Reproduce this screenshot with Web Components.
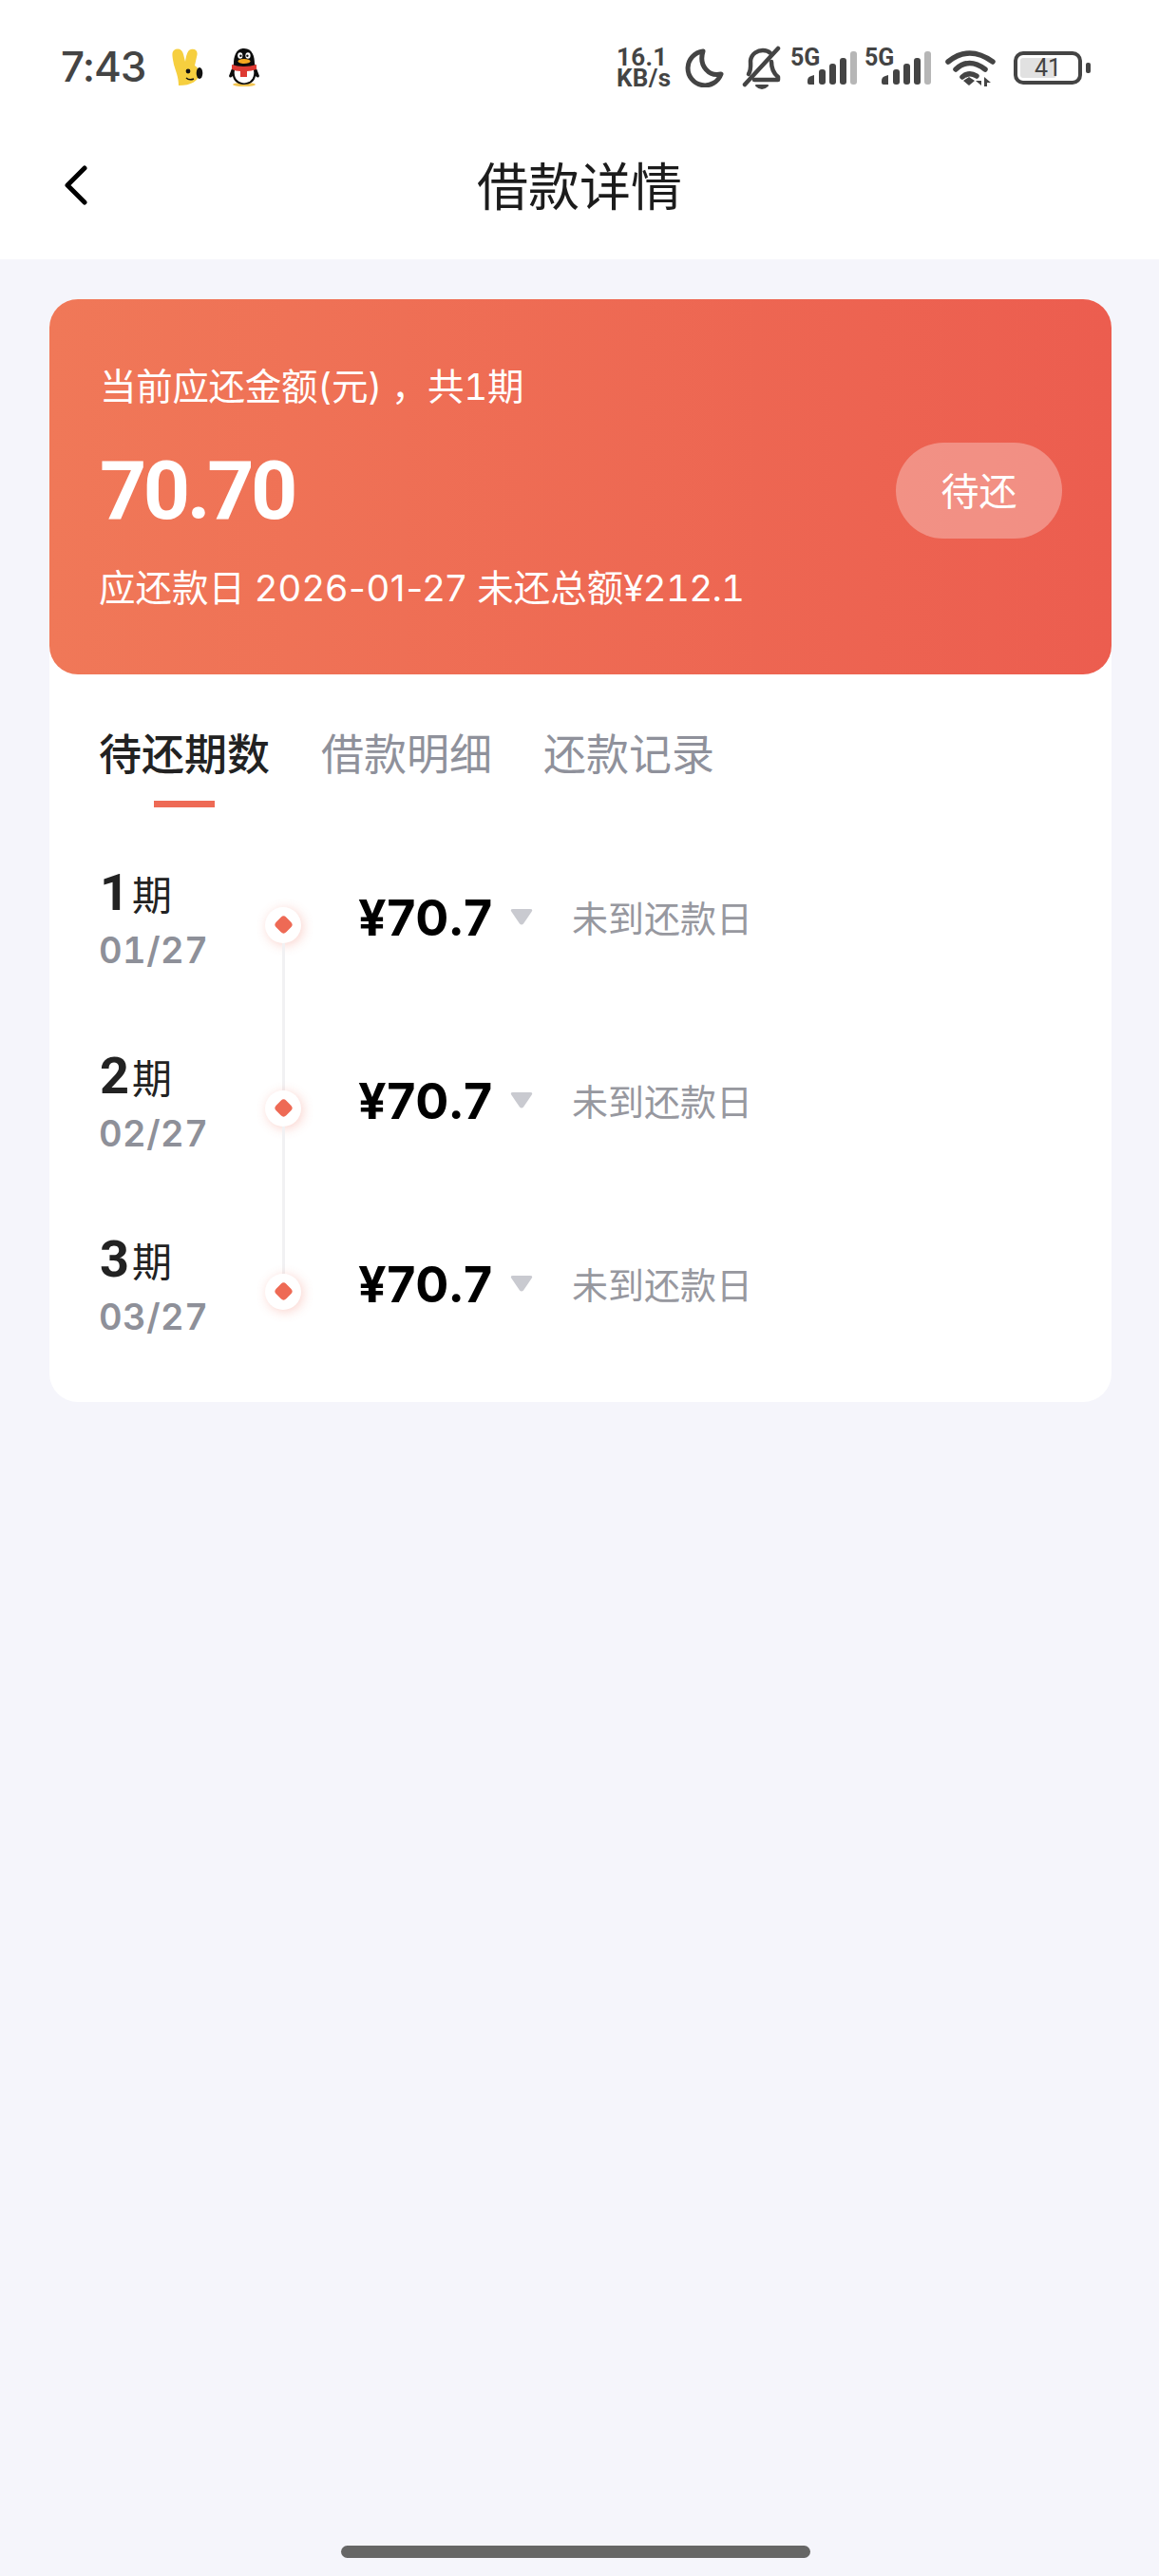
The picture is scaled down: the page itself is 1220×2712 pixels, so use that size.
<!DOCTYPE html>
<html lang="zh-CN">
<head>
<meta charset="utf-8">
<title>借款详情</title>
<style>
  html, body { margin: 0; padding: 0; }
  body {
    width: 1220px;
    min-height: 2712px;
    display: flex;
    flex-direction: column;
    background: #f5f5fb;
    font-family: "Noto Sans CJK SC", "Noto Sans", sans-serif;
  }
  .due-date { font-feature-settings: normal; letter-spacing: .9px; }
  .total { letter-spacing: -.7px; }
</style>
</head>
<body>
  <app-header>
    <status-bar></status-bar>
    <nav-bar>借款详情</nav-bar>
  </app-header>
  <loan-card>
    <loan-hero amount="70.70" state="待还">
      <span slot="title">当前应还金额(元) ，共1期</span>
      <span slot="sub">应还款日 <span class="due-date">2026-01-27</span> 未还总额<span class="total">¥212.1</span></span>
    </loan-hero>
    <loan-tabs></loan-tabs>
    <period-row first num="1" date="01/27" price="¥70.7" note="未到还款日"></period-row>
    <period-row num="2" date="02/27" price="¥70.7" note="未到还款日"></period-row>
    <period-row last num="3" date="03/27" price="¥70.7" note="未到还款日"></period-row>
  </loan-card>
  <home-bar></home-bar>

<script>
const CJK = `"Noto Sans CJK SC", "Noto Sans", sans-serif`;
const MIXED = `Inter, "Noto Sans CJK SC", sans-serif`;

class AppHeader extends HTMLElement {
  constructor() {
    super();
    this.attachShadow({ mode: "open" }).innerHTML = `
      <style>
        :host { display: block; background: #fff; height: 273px; }
      </style>
      <slot></slot>`;
  }
}

class SignalBars extends HTMLElement {
  constructor() {
    super();
    this.attachShadow({ mode: "open" }).innerHTML = `
      <style>
        :host { display: grid; width: 70px; height: 45px; }
        .tag, svg { grid-area: 1 / 1; }
        .tag { font: 700 25px/23px Roboto, sans-serif; color: #444; }
        svg { justify-self: end; align-self: end; margin-bottom: 5px; }
      </style>
      <span class="tag">5G</span>
      <svg width="52" height="35" viewBox="0 0 52 35">
        <path d="M0 31 Q0 27 4 26 L7 25 V35 H2 Q0 35 0 33 Z" fill="#444"/>
        <rect x="12" y="19" width="7" height="16" rx="3" fill="#444"/>
        <rect x="23" y="13" width="7" height="22" rx="3" fill="#444"/>
        <rect x="34" y="7" width="7" height="28" rx="3" fill="#444"/>
        <rect x="45" y="0" width="7" height="35" rx="3" fill="#b6b6b6"/>
      </svg>`;
  }
}

class StatusBar extends HTMLElement {
  constructor() {
    super();
    this.attachShadow({ mode: "open" }).innerHTML = `
      <style>
        :host {
          display: flex;
          align-items: center;
          justify-content: space-between;
          height: 142px;
          padding: 0 72px 0 64px;
          box-sizing: border-box;
          color: #444;
        }
        .left, .right { display: flex; align-items: center; }
        .time { font: 500 44px/54px Inter, Roboto, sans-serif; width: 88px; letter-spacing: -1px; white-space: nowrap; margin-top: -2px; }
        .rabbit { margin-left: 28px; }
        .penguin { margin-left: 26px; }
        .net { font: 700 26px/22px Roboto, sans-serif; width: 60px; white-space: nowrap; }
        .net div { letter-spacing: .3px; }
        .moon { margin-left: 12px; }
        .bell { margin-left: 19px; }
        signal-bars:first-of-type { margin-left: 10px; }
        signal-bars + signal-bars { margin-left: 8px; }
        .wifi { margin-left: 15px; }
        .battery { margin-left: 19px; display: flex; align-items: center; gap: 4px; }
        .cell {
          width: 72px; height: 35px; box-sizing: border-box;
          border: 4px solid #444; border-radius: 10px;
          padding: 3px; display: grid;
        }
        .fill { grid-area: 1 / 1; width: 38px; background: #e1e1e1; border-radius: 3px; }
        .level { grid-area: 1 / 1; text-align: center; font: 400 25px/21px Roboto, sans-serif; color: #444; }
        .nub { width: 5px; height: 11px; border-radius: 2px; background: #444; }
      </style>
      <div class="left">
        <span class="time">7:43</span>
        <svg class="rabbit" width="34" height="40" viewBox="0 0 34 40">
          <path d="M3 2 C7 -1 12 1 13 6 L15 14 C16 8 17 2 21 1 C26 0 29 3 27 9 L25 18 C29 21 31 24 30 28 C28 34 22 39 8 39 C8 30 5 24 3 17 C2 11 0 5 3 2 Z" fill="#f6cf3f"/>
          <ellipse cx="30" cy="26" rx="3.300" ry="6" fill="#111"/>
          <circle cx="18" cy="24" r="2.400" fill="#111"/>
          <path d="M16 31 Q19 34 24 32" stroke="#111" stroke-width="1.400" fill="none"/>
        </svg>
        <svg class="penguin" width="34" height="40" viewBox="0 0 34 40">
          <ellipse cx="17" cy="38" rx="12" ry="2" fill="#f1c452"/>
          <path d="M17 0 C26 0 28 9 28 16 L33 29 Q32 32 29 29 C28 35 23 38 17 38 C11 38 6 35 5 29 Q2 32 1 29 L6 16 C6 9 8 0 17 0 Z" fill="#0c0c0c"/>
          <path d="M8 20 H26 C29 26 27 36 17 36.500 C7 36 5 26 8 20 Z" fill="#fff"/>
          <path d="M4 17 Q17 21 30 17 L30 22 Q24 24 20 24 V30 H13 V24 Q8 24 4 22 Z" fill="#de3a33"/>
          <ellipse cx="17" cy="13.500" rx="6.500" ry="2.600" fill="#f4a71f"/>
          <ellipse cx="12.800" cy="7.500" rx="2.600" ry="3.200" fill="#fff"/>
          <ellipse cx="21" cy="7.500" rx="2.600" ry="3.200" fill="#fff"/>
          <circle cx="13.400" cy="7.800" r="1.200" fill="#111"/>
          <circle cx="20.400" cy="7.800" r="1.200" fill="#111"/>
        </svg>
      </div>
      <div class="right">
        <div class="net"><div>16.1</div><div>KB/s</div></div>
        <svg class="moon" width="41" height="41" viewBox="0 0 41 41">
          <path d="M19 3 A18 18 0 1 0 38 27 C26 30 14 19 19 3 Z" fill="none" stroke="#444" stroke-width="5" stroke-linejoin="round"/>
        </svg>
        <svg class="bell" width="41" height="46" viewBox="0 0 41 46" fill="none" stroke="#444" stroke-width="4.500" stroke-linecap="round" stroke-linejoin="round">
          <path d="M7 30 C10 25 9 20 9 16 C10 8 17 5 22 5 C25 5 28 6 30 8"/>
          <path d="M31 17 C31 24 33 29 38 33 V36 H13"/>
          <path d="M3 41 L38 3"/>
          <path d="M15 42 H27 Q24 45 21 45 Q18 45 15 42 Z" fill="#444" stroke-width="2"/>
        </svg>
        <signal-bars></signal-bars>
        <signal-bars></signal-bars>
        <svg class="wifi" width="53" height="40" viewBox="0 0 53 40" fill="none" stroke="#444" stroke-width="5.500" stroke-linecap="round">
          <path d="M3 14 Q25 -4 50 14"/>
          <path d="M11 22 Q25 9 42 22"/>
          <path d="M18 30 Q25 24 33 29"/>
          <path d="M19 34 L25 30 L31 34 L25 39 Z" fill="#444" stroke="none"/>
          <path d="M32 34 H38 V39 Z" fill="#444" stroke="none"/>
          <path d="M41 30 L48 36 H44 V40 H41 Z" fill="#444" stroke="none"/>
        </svg>
        <div class="battery">
          <div class="cell"><div class="fill"></div><div class="level">41</div></div>
          <div class="nub"></div>
        </div>
      </div>`;
  }
}

class NavBar extends HTMLElement {
  constructor() {
    super();
    this.attachShadow({ mode: "open" }).innerHTML = `
      <style>
        :host {
          display: grid;
          grid-template-columns: 1fr auto 1fr;
          align-items: center;
          height: 106px;
          padding-left: 66px;
        }
        svg { display: block; }
        .title { font: 400 54px/70px ${CJK}; color: #1c1c1c; margin: -3px 0 0 -66px; }
      </style>
      <svg width="26" height="42" viewBox="0 0 26 42">
        <path d="M23 3 L5 21 L23 39" fill="none" stroke="#000" stroke-width="5" stroke-linecap="round" stroke-linejoin="round"/>
      </svg>
      <div class="title"><slot></slot></div>
      <div></div>`;
  }
}

class LoanCard extends HTMLElement {
  constructor() {
    super();
    this.attachShadow({ mode: "open" }).innerHTML = `
      <style>
        :host {
          display: block;
          margin: 42px 50px 0 52px;
          background: #fff;
          border-radius: 30px;
          padding-bottom: 20px;
        }
      </style>
      <slot></slot>`;
  }
}

class LoanHero extends HTMLElement {
  constructor() {
    super();
    this.attachShadow({ mode: "open" }).innerHTML = `
      <style>
        :host {
          display: flex;
          align-items: center;
          justify-content: space-between;
          height: 395px;
          box-sizing: border-box;
          padding: 0 52px 0 53px;
          border-radius: 30px;
          background: linear-gradient(90deg, #f07858, #ec5d4f);
          color: #fff;
        }
        .title, .sub { font: 400 38.500px/50px ${MIXED}; font-feature-settings: "tnum"; white-space: nowrap; }
        .title { margin-top: 1px; letter-spacing: -.3px; }
        .sub { margin-left: -1px; }
        .amount { font: 700 86px/100px Roboto, sans-serif; margin: 35px 0 27px; letter-spacing: -3.500px; }
        .state {
          width: 175px; height: 101px; border-radius: 51px;
          background: rgba(255, 255, 255, .3);
          display: flex; align-items: center; justify-content: center;
          font: 400 40px/50px ${CJK};
          margin-top: 8px;
        }
        .state span { margin-top: -3px; }
      </style>
      <div>
        <div class="title"><slot name="title"></slot></div>
        <div class="amount"></div>
        <div class="sub"><slot name="sub"></slot></div>
      </div>
      <div class="state"><span></span></div>`;
  }

  connectedCallback() {
    this.shadowRoot.querySelector(".amount").textContent = this.getAttribute("amount");
    this.shadowRoot.querySelector(".state span").textContent = this.getAttribute("state");
  }
}

class LoanTabs extends HTMLElement {
  constructor() {
    super();
    this.attachShadow({ mode: "open" }).innerHTML = `
      <style>
        :host {
          display: flex;
          gap: 54px;
          padding: 52px 0 0 52px;
          margin-bottom: 27px;
        }
        .tab { display: flex; flex-direction: column; align-items: center; font: 400 45px/60px ${CJK}; color: #8f919b; }
        .tab.on { font-weight: 500; color: #222; }
        .tab.on::after { content: ""; width: 64px; height: 7px; margin-top: 21px; background: #ee6a55; }
      </style>
      <div class="tab on">待还期数</div>
      <div class="tab">借款明细</div>
      <div class="tab">还款记录</div>`;
  }
}

class PeriodRow extends HTMLElement {
  constructor() {
    super();
    this.attachShadow({ mode: "open" }).innerHTML = `
      <style>
        :host {
          display: grid;
          grid-template-columns: 174px 38px auto auto 1fr;
          align-items: center;
          height: 193px;
          padding-left: 53px;
        }
        .period { margin-bottom: 12px; }
        .label { font: 400 42px/60px ${CJK}; color: #222; display: flex; align-items: baseline; gap: 3px; }
        .num { font: 700 54px/60px Roboto, sans-serif; }
        .date { font: 600 38px/50px Inter, Roboto, sans-serif; font-feature-settings: "tnum"; color: #8e9099; margin: 5px 0 0 -1px; letter-spacing: .5px; }
        .track { align-self: stretch; display: flex; flex-direction: column; align-items: center; }
        .seg { flex: 1; width: 3px; background: #f1f1f3; }
        :host([first]) .up, :host([last]) .down { visibility: hidden; }
        .dot {
          width: 38px; height: 38px; border-radius: 50%;
          background: #fff;
          box-shadow: 2px 2px 12px rgba(238, 106, 85, .3);
          display: flex; align-items: center; justify-content: center;
        }
        .dot::after {
          content: ""; width: 15px; height: 15px; border-radius: 4px;
          background: #ee6a55; transform: rotate(45deg);
        }
        .price { font: 700 52px/60px Inter, Roboto, sans-serif; color: #000; margin: 0 0 14px 60px; white-space: nowrap; letter-spacing: .6px; }
        svg { margin: 0 0 16px 18px; display: block; }
        .note { font: 400 38px/50px ${CJK}; color: #97989f; margin: 0 0 18px 41px; white-space: nowrap; }
      </style>
      <div class="period">
        <div class="label"><span class="num"></span><span>期</span></div>
        <div class="date"></div>
      </div>
      <div class="track">
        <div class="seg up"></div>
        <div class="dot"></div>
        <div class="seg down"></div>
      </div>
      <div class="price"></div>
      <svg width="24" height="17" viewBox="0 0 24 17">
        <path d="M3 0 H21 Q24.500 0 22.500 3 L14 15.500 Q12 17.500 10 15.500 L1.500 3 Q-.5 0 3 0 Z" fill="#c9cad0"/>
      </svg>
      <div class="note"></div>`;
  }

  connectedCallback() {
    const root = this.shadowRoot;
    root.querySelector(".num").textContent = this.getAttribute("num");
    root.querySelector(".date").textContent = this.getAttribute("date");
    root.querySelector(".price").textContent = this.getAttribute("price");
    root.querySelector(".note").textContent = this.getAttribute("note");
  }
}

class HomeBar extends HTMLElement {
  constructor() {
    super();
    this.attachShadow({ mode: "open" }).innerHTML = `
      <style>
        :host { display: block; margin: auto 367px 19px 359px; height: 13px; border-radius: 7px; background: #666; }
      </style>`;
  }
}

customElements.define("app-header", AppHeader);
customElements.define("signal-bars", SignalBars);
customElements.define("status-bar", StatusBar);
customElements.define("nav-bar", NavBar);
customElements.define("loan-card", LoanCard);
customElements.define("loan-hero", LoanHero);
customElements.define("loan-tabs", LoanTabs);
customElements.define("period-row", PeriodRow);
customElements.define("home-bar", HomeBar);
</script>
</body>
</html>
